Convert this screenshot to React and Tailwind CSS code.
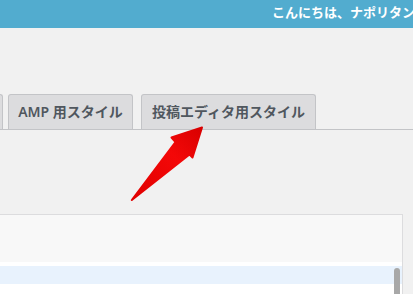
import React from "react";

const jp = { fontFamily: '"Noto Sans", "Noto Sans CJK JP", sans-serif' };

const Tab = ({ label, className = "" }) => (
  <div
    className={`h-[35px] shrink-0 flex items-center justify-center whitespace-nowrap border border-b-0 border-[#c3c4c7] bg-[#dcdcde] rounded-t-[3px] text-[14px] font-semibold text-[#50575e] leading-[24px] ${className}`}
  >
    {label}
  </div>
);

const Arrow = () => (
  <svg
    className="absolute left-0 top-0 pointer-events-none"
    width="413"
    height="294"
    viewBox="0 0 413 294"
  >
    <defs>
      <linearGradient id="arrowRed" x1="0" y1="1" x2="1" y2="0">
        <stop offset="0" stopColor="#e00000" />
        <stop offset="0.6" stopColor="#f40808" />
        <stop offset="1" stopColor="#d80000" />
      </linearGradient>
    </defs>
    <polygon
      points="202,127.5 171.5,137.5 175.5,142 131.8,200 189.5,154.5 192.5,157.5"
      fill="url(#arrowRed)"
      stroke="url(#arrowRed)"
      strokeWidth="2"
      strokeLinejoin="round"
    />
  </svg>
);

export default function App() {
  return (
    <div
      className="relative w-[413px] h-[294px] overflow-hidden bg-[#f1f1f1]"
      style={jp}
    >
      {/* top bar */}
      <div className="h-[28px] bg-[#52accf] pl-[272px] overflow-hidden whitespace-nowrap text-white font-bold text-[13px] leading-[24px]">
        こんにちは、ナポリタン さん
      </div>

      {/* tabs */}
      <div className="mt-[66px] flex items-end border-b border-[#c3c4c7]">
        <Tab label="基本スタイル" className="w-[100px] -ml-[97px]" />
        <Tab label="AMP 用スタイル" className="w-[125px] ml-[5px]" />
        <Tab label="投稿エディタ用スタイル" className="w-[175px] ml-[8px]" />
      </div>

      {/* content panel */}
      <div className="mt-[84px] -ml-[10px] mr-[10px] h-[90px] border border-[#dcdcde] bg-white">
        <div className="h-[47px] bg-[#f8f8f8]" />
        <div className="relative h-[43px]">
          <div className="mt-[4px] h-[18px] bg-[#e8f2fd]" />
          <div className="absolute right-[2px] top-[2px] bottom-0 w-[6px] rounded-t-[3px] bg-[#a8a8a8]" />
        </div>
      </div>

      <Arrow />
    </div>
  );
}
